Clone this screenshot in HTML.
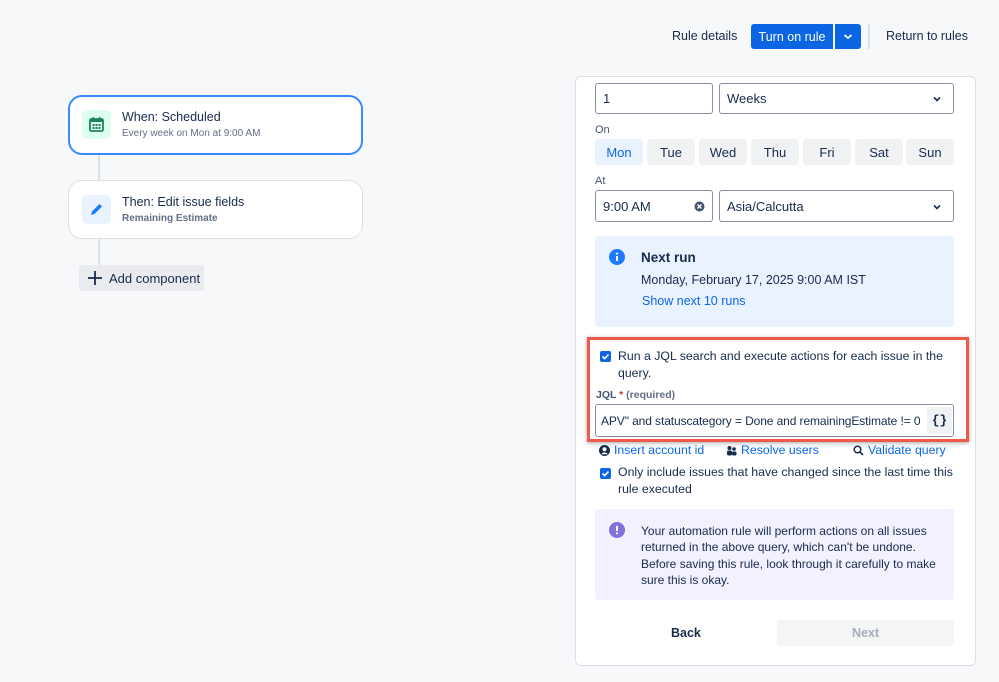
<!DOCTYPE html>
<html><head><style>
*{box-sizing:border-box;margin:0;padding:0}
body{width:999px;height:682px;background:#f7f8f9;font-family:"Liberation Sans",sans-serif;color:#172b4d;position:relative;overflow:hidden;font-size:13px}
.a{position:absolute}
.inp{position:absolute;border:1.5px solid #8590a2;border-radius:3px;background:#fff;padding-left:7px;display:flex;align-items:center;font-size:13px}
.day{position:absolute;top:139px;width:48px;height:26px;background:#f1f2f4;border-radius:3px;display:flex;align-items:center;justify-content:center;font-size:13px}
.chev{position:absolute;right:10px;top:9px}
.lnk{color:#0c66e4}
</style></head><body>
<!-- top bar -->
<div class="a" style="left:672px;top:29px;font-size:12.5px">Rule details</div>
<div class="a" style="left:751px;top:24px;width:82px;height:25px;background:#0c66e4;border-radius:3px 0 0 3px;color:#fff;display:flex;align-items:center;justify-content:center;font-size:12.5px">Turn on rule</div>
<div class="a" style="left:835px;top:24px;width:26px;height:25px;background:#0c66e4;border-radius:0 3px 3px 0"><svg width="26" height="25"><path d="M9.5 11 L13 14 L16.5 11" stroke="#fff" stroke-width="1.8" fill="none"/></svg></div>
<div class="a" style="left:868px;top:24px;width:2px;height:25px;background:#dcdfe4"></div>
<div class="a" style="left:886px;top:29px;font-size:12.5px">Return to rules</div>

<!-- left -->
<div class="a" style="left:98px;top:154px;width:2px;height:112px;background:#dcdfe4"></div>
<div class="a" style="left:68px;top:95px;width:295px;height:60px;background:#fff;border:2px solid #388bff;border-radius:14px"></div>
<div class="a" style="left:82px;top:110px;width:29px;height:29px;background:#dcfff1;border-radius:5px"><svg width="29" height="29"><rect x="8" y="9" width="13" height="12" rx="1.5" fill="none" stroke="#1f845a" stroke-width="1.8"/><rect x="8" y="9" width="13" height="3" fill="#1f845a"/><rect x="10.5" y="7" width="1.5" height="3" fill="#1f845a"/><rect x="17" y="7" width="1.5" height="3" fill="#1f845a"/><g fill="#1f845a"><rect x="10.5" y="14" width="2" height="2"/><rect x="13.5" y="14" width="2" height="2"/><rect x="16.5" y="14" width="2" height="2"/><rect x="10.5" y="17" width="2" height="2"/><rect x="13.5" y="17" width="2" height="2"/><rect x="16.5" y="17" width="2" height="2"/></g></svg></div>
<div class="a" style="left:122px;top:110px;font-size:12.5px">When: Scheduled</div>
<div class="a" style="left:122px;top:128px;font-size:10px;color:#626f86">Every week on Mon at 9:00 AM</div>
<div class="a" style="left:68px;top:180px;width:295px;height:59px;background:#fff;border:1px solid #dcdfe4;border-radius:14px"></div>
<div class="a" style="left:82px;top:195px;width:29px;height:29px;background:#e9f2ff;border-radius:5px"><svg width="29" height="29"><path d="M9 20 L10 16.5 L17.5 9 L20 11.5 L12.5 19 Z" fill="#1d7afc"/></svg></div>
<div class="a" style="left:122px;top:195px;font-size:12.5px">Then: Edit issue fields</div>
<div class="a" style="left:122px;top:213px;font-size:10px;color:#626f86;font-weight:bold">Remaining Estimate</div>
<div class="a" style="left:79px;top:265px;width:125px;height:26px;background:#e9ebee;border-radius:3px"><svg class="a" style="left:8px;top:5px" width="16" height="16"><path d="M8 1V15M1 8H15" stroke="#172b4d" stroke-width="1.8"/></svg><span class="a" style="left:30px;top:6px;font-size:13px">Add component</span></div>

<!-- panel -->
<div class="a" style="left:575px;top:76px;width:401px;height:590px;background:#fff;border:1px solid #dcdfe4;border-radius:6px"></div>
<div class="inp" style="left:595px;top:83px;width:118px;height:31px">1</div>
<div class="inp" style="left:719px;top:83px;width:235px;height:31px">Weeks<svg class="chev" width="12" height="12"><path d="M3 4.5L6 7.5L9 4.5" stroke="#172b4d" stroke-width="1.6" fill="none"/></svg></div>
<div class="a" style="left:595px;top:124px;font-size:11px;color:#44546f">On</div>
<div class="day" style="left:595px;background:#e9f2ff;color:#0c66e4">Mon</div>
<div class="day" style="left:647px">Tue</div>
<div class="day" style="left:699px">Wed</div>
<div class="day" style="left:751px">Thu</div>
<div class="day" style="left:803px">Fri</div>
<div class="day" style="left:855px">Sat</div>
<div class="day" style="left:906px">Sun</div>
<div class="a" style="left:595px;top:175px;font-size:11px;color:#44546f">At</div>
<div class="inp" style="left:595px;top:190px;width:118px;height:32px">9:00 AM<svg class="a" style="left:98px;top:10px" width="11" height="11"><circle cx="5.5" cy="5.5" r="5" fill="#44546f"/><path d="M3.5 3.5L7.5 7.5M7.5 3.5L3.5 7.5" stroke="#fff" stroke-width="1.4"/></svg></div>
<div class="inp" style="left:719px;top:190px;width:235px;height:32px">Asia/Calcutta<svg class="chev" width="12" height="12" style="top:10px"><path d="M3 4.5L6 7.5L9 4.5" stroke="#172b4d" stroke-width="1.6" fill="none"/></svg></div>

<div class="a" style="left:595px;top:236px;width:359px;height:91px;background:#e9f2ff;border-radius:3px"></div>
<svg class="a" style="left:609px;top:249px" width="16" height="16"><circle cx="8" cy="8" r="8" fill="#1d7afc"/><rect x="7" y="7" width="2" height="5" fill="#fff"/><circle cx="8" cy="4.6" r="1.1" fill="#fff"/></svg>
<div class="a" style="left:641px;top:250px;font-size:13.5px;font-weight:bold">Next run</div>
<div class="a" style="left:641px;top:273px;font-size:12.5px">Monday, February 17, 2025 9:00 AM IST</div>
<div class="a lnk" style="left:642px;top:294px;font-size:12.5px">Show next 10 runs</div>

<div class="a" style="left:587px;top:337px;width:382px;height:105px;border:3px solid #f05a4a;box-shadow:0 1px 4px rgba(0,0,0,.35)"></div>
<div class="a" style="left:600px;top:351px;width:11px;height:11px;background:#0c66e4;border-radius:2px"><svg width="11" height="11" class="a"><path d="M2.5 5.5L4.6 7.6L8.5 3.6" stroke="#fff" stroke-width="1.6" fill="none"/></svg></div>
<div class="a" style="left:618px;top:348px;width:340px;font-size:12.3px;line-height:16.5px">Run a JQL search and execute actions for each issue in the query.</div>
<div class="a" style="left:596px;top:389px;font-size:10.5px;color:#44546f;font-weight:bold">JQL <span style="color:#c9372c">*</span> <span style="font-weight:bold;color:#626f86">(required)</span></div>
<div class="a" style="left:595px;top:404px;width:359px;height:33px;border:1.5px solid #8590a2;border-radius:3px;background:#fff"></div>
<div class="a" style="left:601px;top:414px;font-size:12px;white-space:nowrap;letter-spacing:-0.1px">APV" and statuscategory = Done and remainingEstimate != 0</div>
<div class="a" style="left:927px;top:407px;width:25px;height:27px;background:#f1f2f4;border-radius:3px;font-size:13px;font-weight:bold;display:flex;align-items:center;justify-content:center;font-family:'Liberation Mono',monospace">{}</div>

<svg class="a" style="left:599px;top:445px" width="11" height="11"><circle cx="5.5" cy="5.5" r="5.5" fill="#172b4d"/><circle cx="5.5" cy="4.2" r="2" fill="#fff"/><path d="M2 9.2Q5.5 5.5 9 9.2" fill="#fff"/></svg>
<div class="a lnk" style="left:614px;top:443px;font-size:12.3px">Insert account id</div>
<svg class="a" style="left:726px;top:445px" width="11" height="11"><circle cx="3.5" cy="3" r="2" fill="#172b4d"/><circle cx="8" cy="4" r="1.8" fill="#172b4d"/><rect x="1" y="5.5" width="5" height="5" rx="1.5" fill="#172b4d"/><rect x="6" y="6.5" width="4.5" height="4" rx="1.5" fill="#172b4d"/></svg>
<div class="a lnk" style="left:741px;top:443px;font-size:12.3px">Resolve users</div>
<svg class="a" style="left:853px;top:445px" width="11" height="11"><circle cx="4.5" cy="4.5" r="3.3" fill="none" stroke="#172b4d" stroke-width="1.5"/><path d="M7 7L10 10" stroke="#172b4d" stroke-width="1.6"/></svg>
<div class="a lnk" style="left:868px;top:443px;font-size:12.3px">Validate query</div>

<div class="a" style="left:600px;top:468px;width:11px;height:11px;background:#0c66e4;border-radius:2px"><svg width="11" height="11" class="a"><path d="M2.5 5.5L4.6 7.6L8.5 3.6" stroke="#fff" stroke-width="1.6" fill="none"/></svg></div>
<div class="a" style="left:618px;top:464px;width:340px;font-size:12.3px;line-height:16.5px">Only include issues that have changed since the last time this rule executed</div>

<div class="a" style="left:595px;top:509px;width:359px;height:91px;background:#f3f0ff;border-radius:3px"></div>
<svg class="a" style="left:609px;top:522px" width="16" height="16"><circle cx="8" cy="8" r="8" fill="#8270db"/><rect x="7" y="3.8" width="2" height="5.2" fill="#fff"/><circle cx="8" cy="11.4" r="1.1" fill="#fff"/></svg>
<div class="a" style="left:641px;top:523px;width:305px;font-size:12px;line-height:16.3px">Your automation rule will perform actions on all issues returned in the above query, which can't be undone. Before saving this rule, look through it carefully to make sure this is okay.</div>

<div class="a" style="left:671px;top:626px;font-size:12.5px;font-weight:bold">Back</div>
<div class="a" style="left:777px;top:620px;width:177px;height:26px;background:#f4f5f7;border-radius:3px;color:#a5adba;font-size:12.5px;font-weight:bold;display:flex;align-items:center;justify-content:center">Next</div>
</body></html>
